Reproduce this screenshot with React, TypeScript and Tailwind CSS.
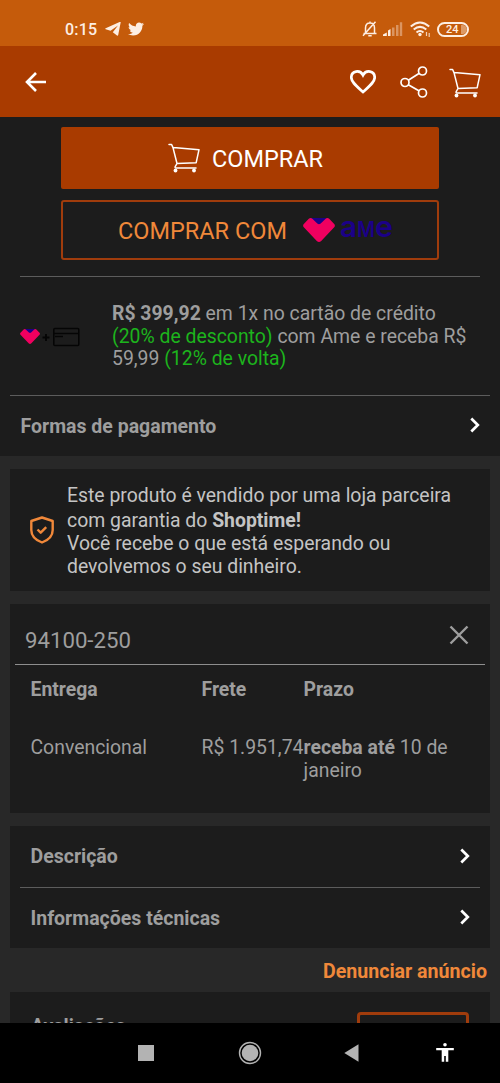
import type { ReactNode } from 'react'
import { FaTwitter } from 'react-icons/fa'
import { clsx } from 'clsx'

const SHIPPING = [
  { name: 'Convencional', price: 'R$ 1.951,74', prefix: 'receba até', date: '10 de janeiro' },
]

const SECTIONS = ['Descrição', 'Informações técnicas']

function CartIcon({ className }: { className?: string }) {
  return (
    <svg viewBox="0 0 32 30" fill="none" stroke="currentColor" strokeLinecap="round" strokeLinejoin="round" className={className}>
      <path d="M1 1.500h2.600L5 4.600 9 20.500l19.200-.8L31 6.700 5.300 4.600M9 20.500l-1.800 3.200c-.4.800 0 1.200.8 1.200h20" strokeWidth="1.500" />
      <circle cx="7.500" cy="27.500" r="1.900" fill="currentColor" stroke="none" />
      <circle cx="26" cy="27.500" r="1.900" fill="currentColor" stroke="none" />
    </svg>
  )
}

function AmeHeart({ className }: { className?: string }) {
  return (
    <svg viewBox="0 0 32 24" className={className}>
      <path d="M8 0h16l-3 6-5 3-5-3z" fill="#1b0088" />
      <path
        d="M5.800.7q2-1.300 3.800.3l4.700 4.600q1.700 1.500 3.400 0L22.400 1q1.800-1.600 3.800-.3l5 5.300q1.400 1.700 0 3.300L18.200 22.900q-2.200 2-4.400 0L.8 9.300q-1.400-1.600 0-3.300z"
        fill="#f0005f"
      />
    </svg>
  )
}

function Chevron() {
  return (
    <svg viewBox="0 0 10 16" fill="none" stroke="white" strokeWidth="2.700" className="w-[10px] h-4 shrink-0 mb-[2px]">
      <path d="M1.300 1.500 7.800 8l-6.500 6.500" />
    </svg>
  )
}

function Card({ className, children }: { className?: string; children: ReactNode }) {
  return <section className={clsx('mx-[10px] bg-[#1c1c1c]', className)}>{children}</section>
}

function StatusBar() {
  return (
    <div className="h-[46px] shrink-0 bg-[#c55b0b] text-[#fdeee3] flex items-center justify-between pt-3 pl-[65px] pr-[31px]">
      <div className="flex items-center">
        <span className="text-[16px] font-medium tracking-[0.2px] w-[40px] leading-none pt-px">0:15</span>
        <svg viewBox="0 0 16 14" fill="currentColor" className="w-4 h-[14px]">
          <path d="M15.700.2 13.200 13q-.3 1-1.200.5L7.800 10.300 13 3.500 5.500 8.800.7 7.200q-1-.5 0-1L14.600.100Q15.600-.3 15.700.2z" />
        </svg>
        <FaTwitter className="ml-[7px] w-4 h-4" />
      </div>
      <div className="flex items-center">
        <svg viewBox="0 0 16 16" fill="none" stroke="currentColor" strokeWidth="1.500" className="w-4 h-4">
          <path d="M1.500 12.600h13M3.500 12.500V7Q3.500 2 8 2t4.500 5v5.500M8 .5V2M6.300 14.700h3.400M1 14.800 13.500.8" />
        </svg>
        <svg viewBox="0 0 20 14" fill="currentColor" className="ml-[5px] w-5 h-[14px]">
          <path d="M0 14v-1.500l3.800-2V14zM5 8.500l2.500-1.500v7H5z" />
          <path d="M9 5.500h2.500V14H9zM13 3h2.500v11H13zM16.800.3h2.400V14h-2.400z" opacity=".4" />
        </svg>
        <svg viewBox="0 0 21 16" fill="none" stroke="currentColor" strokeWidth="2" className="ml-[7px] w-[21px] h-4">
          <path d="M.8 5.500q9.200-8 18.400 0M3.700 8.600q6.300-5.400 12.600 0M6.500 11.500q3.500-3 7 0" />
          <circle cx="10" cy="13.500" r="1.700" fill="currentColor" stroke="none" />
          <path d="M16.500 11v4M19.200 12v4" strokeWidth="1.200" opacity=".8" />
        </svg>
        <div className="ml-[6px] w-8 h-[15px] rounded-full border-2 border-current flex items-center pl-[7px] overflow-hidden">
          <span className="text-[11px] font-medium leading-none">24</span>
          <span className="ml-[2px] w-[6px] h-[9px] rounded-r-full bg-[#dd9a66]" />
        </div>
      </div>
    </div>
  )
}

function Header() {
  return (
    <header className="h-[71px] shrink-0 bg-[#a93b00] text-white flex items-center pl-[25px] pr-[19px]">
      <svg viewBox="0 0 22 20" fill="none" stroke="currentColor" strokeWidth="2.600" className="w-[22px] h-5">
        <path d="M21 10H2.500M11 1 2 10l9 9" />
      </svg>
      <svg viewBox="0 0 26 24" fill="none" stroke="currentColor" strokeWidth="2.700" className="ml-auto w-[26px] h-6">
        <path d="M13 22C6 15.700 1.300 12 1.300 7.500c0-7 8.700-8 11.700-2.300C16-.5 24.700.5 24.700 7.500 24.700 12 20 15.700 13 22z" />
      </svg>
      <svg viewBox="0 0 28 32" fill="none" stroke="currentColor" strokeWidth="1.700" className="ml-6 w-7 h-8">
        <circle cx="22.500" cy="5" r="4" />
        <circle cx="5" cy="16.500" r="4" />
        <circle cx="22.500" cy="27" r="4" />
        <path d="m8.300 14.300 11-7M8.300 18.800l11 6.200" />
      </svg>
      <CartIcon className="ml-[21px] mt-[3px] w-8 h-[30px]" />
    </header>
  )
}

function NavBar() {
  return (
    <nav className="h-[60px] shrink-0 bg-black flex items-center pl-[138px] pr-[46px] text-[#b3b3b3]">
      <span className="w-4 h-4 bg-current" />
      <svg viewBox="0 0 24 24" className="ml-[84px] w-6 h-6">
        <circle cx="12" cy="12" r="10.500" fill="none" stroke="currentColor" strokeWidth="1.400" />
        <circle cx="12" cy="12" r="8.300" fill="currentColor" />
      </svg>
      <svg viewBox="0 0 15 18" fill="currentColor" className="ml-[82px] w-[15px] h-[18px]">
        <path d="M14.500.3v17.400L.3 9z" />
      </svg>
      <svg viewBox="0 0 18 19" fill="white" className="ml-auto mb-[2px] w-[18px] h-[19px]">
        <circle cx="9" cy="1.800" r="1.800" />
        <path d="M.2 5h17.600v2.200H12.300v11.600h-2.500V13H8.200v5.800H5.700V7.200H.2z" />
      </svg>
    </nav>
  )
}

export default function App() {
  return (
    <div className="w-[500px] h-[1083px] overflow-hidden flex flex-col bg-[#282828] text-[#9e9e9e] font-[Roboto,sans-serif] text-[19.400px] leading-[23px]">
      <StatusBar />
      <Header />

      <main className="flex-1 min-h-0 overflow-hidden">
        {/* Compra */}
        <section className="h-[339px] bg-[#1c1c1c] pt-[10px]">
          <button className="mx-auto w-[378px] h-[62px] rounded-[2px] bg-[#a93b00] text-white flex items-center pl-[107px]">
            <CartIcon className="w-8 h-[30px]" />
            <span className="ml-3 text-[23.500px] pt-[3px]">COMPRAR</span>
          </button>
          <button className="mt-[11px] mx-auto w-[378px] h-[60px] rounded-[3px] border-2 border-[#a03c0c] text-[#f0883a] flex items-center pl-[55px]">
            <span className="text-[23.500px] whitespace-nowrap w-[185px] text-left pt-[3px]">COMPRAR COM</span>
            <AmeHeart className="w-8 h-6" />
            <svg viewBox="0 0 54 48" className="ml-[5px] w-[54px] h-12 font-[Inter,sans-serif] font-semibold" fill="#1b0088">
              <text x="0" y="31" fontSize="29" textLength="17" lengthAdjust="spacingAndGlyphs">a</text>
              <text x="17" y="31" fontSize="22" textLength="18" lengthAdjust="spacingAndGlyphs">M</text>
              <text x="35" y="31" fontSize="29" textLength="18" lengthAdjust="spacingAndGlyphs">e</text>
            </svg>
          </button>

          <div className="mx-5 mt-[16px] border-t border-[#5c5c5c] h-[119px] flex pt-[26px]">
            <div className="w-[92px] shrink-0 flex items-center h-[67px]">
              <AmeHeart className="w-5 h-[15px]" />
              <svg viewBox="0 0 40 20" fill="none" stroke="#050505" className="w-10 h-5">
                <path d="M2.500 10.500h7M6 7v7" strokeWidth="1.800" />
                <rect x="13.800" y="1.500" width="25" height="17" rx="1" strokeWidth="1.500" />
                <path d="M14 6.500h25M15 9.500h8" strokeWidth="1.300" />
              </svg>
            </div>
            <p className="leading-[22.700px] whitespace-nowrap">
              <b>R$ 399,92</b> em 1x no cartão de crédito
              <br />
              <span className="text-[#1cb41c]">(20% de desconto)</span> com Ame e receba R$
              <br />
              59,99 <span className="text-[#1cb41c]">(12% de volta)</span>
            </p>
          </div>

          <div className="mx-[10px] border-t border-[#5c5c5c] h-[61px] flex items-center justify-between px-[10px]">
            <b className="text-[19.500px] pl-[0.500px]">Formas de pagamento</b>
            <Chevron />
          </div>
        </section>

        {/* Garantia */}
        <Card className="mt-[13px] h-[122px] flex pl-[20px] text-[#c4c4c4]">
          <svg viewBox="0 0 24 28" fill="none" stroke="#f0883a" strokeWidth="2.400" strokeLinejoin="round" className="mt-[47px] w-6 h-7">
            <path d="M12 1.500 22.700 5v9q0 8.500-10.700 12.500Q1.300 22.500 1.300 14V5z" />
            <path d="m7.500 13.500 3.200 3.200 5.500-5.500" />
          </svg>
          <div className="ml-[13px] pt-[14px] whitespace-nowrap leading-[22.500px]">
            <p className="leading-[25px]">Este produto é vendido por uma loja parceira</p>
            <p className="leading-[25px]">com garantia do <b>Shoptime!</b></p>
            <p>Você recebe o que está esperando ou</p>
            <p>devolvemos o seu dinheiro.</p>
          </div>
        </Card>

        {/* Frete */}
        <Card className="mt-[13px] h-[209px] px-[5px]">
          <div className="h-[61px] border-b-[1.500px] border-[#8e8e8e] flex items-center justify-between pl-[10px] pr-[16px]">
            <span className="text-[22.200px] pt-3">94100-250</span>
            <svg viewBox="0 0 20 20" fill="none" stroke="currentColor" strokeWidth="2.400" className="w-5 h-5 mt-px">
              <path d="m1.500 1.500 17 17m0-17-17 17" />
            </svg>
          </div>
          <div className="grid grid-cols-[171px_102px_165px] pl-[15.500px] pt-[13px] whitespace-nowrap font-bold">
            <span>Entrega</span>
            <span>Frete</span>
            <span>Prazo</span>
          </div>
          {SHIPPING.map(s => (
            <div key={s.name} className="grid grid-cols-[171px_102px_165px] pl-[15.500px] pt-[35px]">
              <span>{s.name}</span>
              <span className="whitespace-nowrap">{s.price}</span>
              <span><b>{s.prefix}</b> {s.date}</span>
            </div>
          ))}
        </Card>

        {/* Detalhes */}
        <Card className="mt-[13px] h-[122px] px-[10px]">
          {SECTIONS.map((label, i) => (
            <div key={label} className={clsx('h-[61px] flex items-center justify-between px-[10px]', i > 0 && 'border-t border-[#5c5c5c]')}>
              <b className="text-[19.500px] pl-[0.500px]">{label}</b>
              <Chevron />
            </div>
          ))}
        </Card>

        <p className="h-11 pr-[13px] pt-[2px] flex items-center justify-end text-[19.600px] font-bold text-[#f0883a]">Denunciar anúncio</p>

        <Card className="h-[80px] flex items-start justify-between pl-[21px] pr-[21px] pt-5">
          <b className="pt-[3px]">Avaliações</b>
          <span className="w-[112px] h-12 rounded-[4px] border-[3px] border-[#a03c0c]" />
        </Card>
      </main>

      <NavBar />
    </div>
  )
}
